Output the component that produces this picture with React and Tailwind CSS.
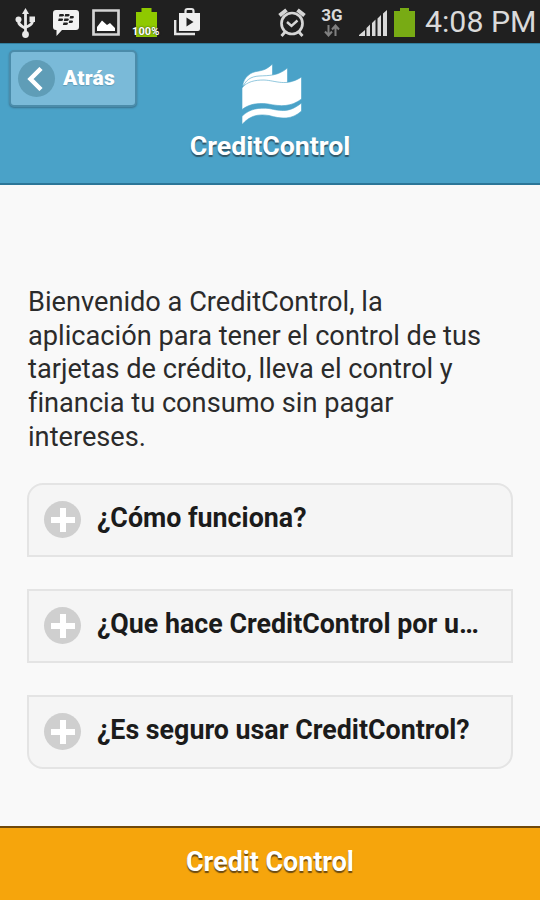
const faqs = [
  { title: '¿Cómo funciona?', shape: 'rounded-t-2xl' },
  { title: '¿Que hace CreditControl por u…', shape: '' },
  { title: '¿Es seguro usar CreditControl?', shape: 'rounded-b-2xl' },
]

const UsbIcon = () => (
  <svg className="ml-[15px] h-8 w-5 shrink-0" viewBox="0 0 20 32" fill="none" stroke="#e8e8e8" strokeWidth="2.8">
    <path d="M10.500 5v23M3.500 13v2c0 4 3 5 7 7.500M17.500 13v2c0 4-3 4-7 6.500" />
    <path d="M10.500 2l3.500 6H7z" fill="#e8e8e8" stroke="none" />
    <circle cx="3.500" cy="13.500" r="3" fill="#e8e8e8" stroke="none" />
    <path d="M14.500 10.500h5.500v5.500h-5.500z" fill="#e8e8e8" stroke="none" />
    <circle cx="10.500" cy="28.500" r="3.400" fill="#e8e8e8" stroke="none" />
  </svg>
)

const MessengerIcon = () => (
  <svg className="ml-[18px] h-8 w-[27px] shrink-0" viewBox="0 0 27 32">
    <path d="M3 4h20q3 0 3 3v14q0 3-3 3H9l-5.500 6V24H3q-3 0-3-3V7q0-3 3-3z" fill="#f2f2f2" />
    <g fill="#222">
      <path d="M6.500 8h3.200q1.500 0 1.200 1.300t-1.900 1.300H5.900z" />
      <path d="M12.200 8h3.200q1.500 0 1.200 1.300t-1.900 1.300h-3.100z" />
      <path d="M5.700 12.500h3.200q1.500 0 1.200 1.300t-1.900 1.300H5.100z" />
      <path d="M11.400 12.500h3.200q1.500 0 1.200 1.300t-1.900 1.300h-3.100z" />
      <path d="M17.200 10h2.500q1.500 0 1.200 1.300t-1.900 1.300h-2.400z" />
      <path d="M16.300 14.500h2.500q1.500 0 1.200 1.300t-1.900 1.300h-2.400z" />
      <path d="M10.500 16.500h3.200q1.500 0 1.200 1.300t-1.900 1.300H9.900z" />
    </g>
  </svg>
)

const GalleryIcon = () => (
  <svg className="ml-3 h-8 w-7 shrink-0" viewBox="0 0 28 32">
    <path d="M1.500 4.500h25v24h-25z" fill="#222" stroke="#d4d4d4" strokeWidth="2.700" />
    <path d="M5 25v-4l5-6.500 5 4.500 3-2 5 5v3z" fill="#fff" />
  </svg>
)

const PlayStoreIcon = () => (
  <svg className="ml-[17px] h-8 w-7 shrink-0" viewBox="0 0 28 32">
    <path d="M1.200 14v14H21" fill="none" stroke="#e4e4e4" strokeWidth="2.400" />
    <path d="M11.500 8V5q0-2 2-2h4q2 0 2 2v3" fill="none" stroke="#e4e4e4" strokeWidth="2.200" />
    <path d="M5 7h21v16q0 2-2 2H5z" fill="#f0f0f0" />
    <path d="M12.500 11.500l7 4.500-7 4.500z" fill="#222" />
  </svg>
)

const AlarmIcon = () => (
  <svg className="h-8 w-7 shrink-0" viewBox="0 0 28 32" fill="none" stroke="#d6d6d6">
    <circle cx="14" cy="17.500" r="10.500" strokeWidth="2.700" />
    <path d="M9 16l4.500 4L19.500 14.500" strokeWidth="2.400" />
    <path d="M1.500 9.500l7-5.500M26.500 9.500l-7-5.500" strokeWidth="4" />
    <path d="M7 26l-3.500 4M21 26l3.500 4" strokeWidth="2.800" />
  </svg>
)

const SignalIcon = () => (
  <svg className="ml-[15px] h-8 w-[29px] shrink-0" viewBox="0 0 29 32" fill="#d9d9d9">
    <path d="M0 30v-1l6-5v6zM7.500 30v-8l3.500-3.500V30zM13 30V17l3.500-3.500V30zM18.500 30V12.500l3.500-3.500V30zM24 30V7.500L28 4v26z" />
  </svg>
)

const BatteryIcon = () => (
  <svg className="ml-[6px] h-8 w-[21px] shrink-0" viewBox="0 0 21 32">
    <path d="M6 2h9v3h6v26H0V5h6z" fill="#78ab14" />
  </svg>
)

const StatusBar = () => (
  <div className="flex h-[43px] items-center bg-[#202020] text-[#dadada]">
    <UsbIcon />
    <MessengerIcon />
    <GalleryIcon />
    <div className="relative ml-4">
      <svg className="h-8 w-[21px]" viewBox="0 0 21 32">
        <path d="M5.500 2h10v4H21v25H0V6h5.500z" fill="#8fc900" />
      </svg>
      <span className="absolute top-[20px] -left-[4px] text-[11px] leading-3 font-bold tracking-[0.1px] text-white [text-shadow:0_0_2px_#222]">100%</span>
    </div>
    <PlayStoreIcon />
    <div className="ml-auto flex items-center">
      <AlarmIcon />
      <div className="ml-[14px] flex w-6 flex-col items-center">
        <span className="text-[17px] leading-[17px] font-bold">3G</span>
        <svg className="h-[13px] w-4" viewBox="0 0 16 13" fill="none" stroke="#808080" strokeWidth="2">
          <path d="M4.500 1v10M1 7.500l3.500 4L8 7.500M11.500 12V2M8 5.500l3.500-4 3.500 4" />
        </svg>
      </div>
      <SignalIcon />
      <BatteryIcon />
      <span className="ml-[10px] w-[115px] text-[30.3px] leading-8 whitespace-nowrap">4:08 PM</span>
    </div>
  </div>
)

const Header = () => (
  <header className="relative flex h-[142px] flex-col items-center border-b-2 border-[#2c7698] bg-[#4aa2c8] pt-[21px] shadow-[inset_0_1px_0_#327f9f]">
    <button className="absolute top-[7px] left-[9px] flex h-[57px] w-[128px] items-center rounded-[5px] border-2 border-[#4b8caa] bg-[#7abad8] pl-[7px] shadow-[0_1px_2px_#39718c]">
      <span className="flex size-[37px] items-center justify-center rounded-full bg-[#5f9db7]">
        <svg className="size-6" viewBox="0 0 24 24" fill="none" stroke="#fff" strokeWidth="4.500">
          <path d="M16 1.500L5.500 12 16 22.500" />
        </svg>
      </span>
      <span className="ml-2 text-[21px] font-black tracking-[0.2px] text-white [text-shadow:0_1px_1px_#5e9ab5]">Atrás</span>
    </button>
    {/* two pages behind, the front page, then the ribbon under it */}
    <svg className="ml-1 h-[60px] w-[60px]" viewBox="0 0 60 60" fill="#fff" stroke="#4aa2c8" strokeWidth="0.6">
      <path d="M.5 22C2 13 8 8 17 7c6-1 9-3 13.500-7V14H10z" />
      <path d="M.5 24.500C3 16 9 12.500 17 12c10-.5 19 0 28.500-8V20H8z" />
      <path d="M0 45.500V24C5 17.500 13 16 22 16c12 .5 22 7 37.500-3v22C49 43 39 42.500 26 40 14 38.500 7 40.500 0 45.500z" />
      <path d="M0 60.500v-8.300C8 44.500 17 43.500 27 44.500c12 2.500 20 4.500 32.500-5.500v8C50 56 39 55 27 51.500 15 49.500 7 52.500 0 60.500z" />
    </svg>
    <h1 className="mt-1 text-[26.7px] leading-9 font-bold whitespace-nowrap text-white [text-shadow:0_2px_1px_#315768]">CreditControl</h1>
  </header>
)

const FaqItem = ({ title, shape }) => (
  <button className={`flex h-[74px] w-full items-center border-2 border-[#e4e4e4] bg-[#f5f5f5] pl-[15px] text-left ${shape}`}>
    <span className="flex size-[37px] shrink-0 items-center justify-center rounded-full bg-[#cfcfcf]">
      <svg className="size-6" viewBox="0 0 24 24" fill="#fff">
        <path d="M9 0h6v9h9v6h-9v9H9v-9H0V9h9z" />
      </svg>
    </span>
    <span className="-mt-0.5 ml-4 text-[26.8px] font-bold whitespace-nowrap text-[#1b1b1b]">{title}</span>
  </button>
)

const App = () => (
  <div className="flex h-[900px] w-[540px] flex-col overflow-hidden bg-[#f9f9f9] font-['Roboto',sans-serif]">
    <StatusBar />
    <Header />
    <main className="flex-1 px-[27px] pt-[101px]">
      <p className="pl-px text-[27.2px] leading-[33.7px] whitespace-nowrap text-[#2b2b2b] [font-variant-ligatures:none]">
        Bienvenido a CreditControl, la<br />
        aplicación para tener el control de tus<br />
        tarjetas de crédito, lleva el control y<br />
        financia tu consumo sin pagar<br />
        intereses.
      </p>
      <div className="mt-7 flex flex-col gap-8">
        {faqs.map((faq) => <FaqItem key={faq.title} {...faq} />)}
      </div>
    </main>
    <footer className="flex h-[74px] items-center justify-center border-t-2 border-[#70490a] bg-[#f6a50c]">
      <span className="-mt-1 text-[26.8px] font-bold text-white [text-shadow:0_2px_1px_#6b4a10]">Credit Control</span>
    </footer>
  </div>
)

export default App
